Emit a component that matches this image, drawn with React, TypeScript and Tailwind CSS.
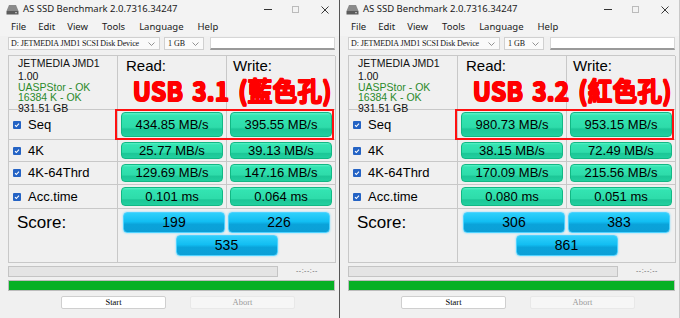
import React from "react";

type Win = {
  tag: string;
  rows: { label: string; read: string; write: string }[];
  scores: [string, string, string];
};

const windows: Win[] = [
  {
    tag: "USB 3.1 (藍色孔)",
    rows: [
      { label: "Seq", read: "434.85 MB/s", write: "395.55 MB/s" },
      { label: "4K", read: "25.77 MB/s", write: "39.13 MB/s" },
      { label: "4K-64Thrd", read: "129.69 MB/s", write: "147.16 MB/s" },
      { label: "Acc.time", read: "0.101 ms", write: "0.064 ms" },
    ],
    scores: ["199", "226", "535"],
  },
  {
    tag: "USB 3.2 (紅色孔)",
    rows: [
      { label: "Seq", read: "980.73 MB/s", write: "953.15 MB/s" },
      { label: "4K", read: "38.15 MB/s", write: "72.49 MB/s" },
      { label: "4K-64Thrd", read: "170.09 MB/s", write: "215.56 MB/s" },
      { label: "Acc.time", read: "0.080 ms", write: "0.051 ms" },
    ],
    scores: ["306", "383", "861"],
  },
];

const rowHeights = ["h-[30px]", "h-[22px]", "h-[23px]", "h-[24px]"];

function DriveIcon() {
  return (
    <svg width="13" height="11" viewBox="0 0 13 11">
      <path d="M3 1h7l2.5 6h-12z" fill="#8a8a8a" />
      <rect x="0.5" y="7" width="12" height="3.5" fill="#5c5c5c" />
      <rect x="9" y="8.2" width="2" height="1" fill="#c8c8c8" />
    </svg>
  );
}

function Check() {
  return (
    <div className="flex h-[8px] w-[8px] items-center justify-center rounded-[1px] bg-[#2463c4]">
      <svg width="6" height="6" viewBox="0 0 6 6">
        <path d="M1 3.2l1.3 1.3L5 1.6" stroke="white" strokeWidth="1.1" fill="none" />
      </svg>
    </div>
  );
}

function Chevron() {
  return (
    <svg width="7" height="4" viewBox="0 0 7 4" className="ml-auto shrink-0">
      <path d="M0.5 0.5l3 3 3-3" stroke="#777" strokeWidth="0.8" fill="none" />
    </svg>
  );
}

function ValueBox({ text }: { text: string }) {
  return (
    <div className="flex h-full items-center justify-center rounded-[4px] border border-[#12b884] bg-[linear-gradient(to_bottom,#5af2c8_0%,#33e4b2_12%,#2edcaa_62%,#1cc797_70%,#22cf9f_100%)] text-[13px] text-black">
      {text}
    </div>
  );
}

function ScoreBox({ text }: { text: string }) {
  return (
    <div className="flex h-[21px] w-[102px] items-center justify-center rounded-[4px] border border-[#4fd2ff] bg-[linear-gradient(to_bottom,#2fd0fb_0%,#12bef2_45%,#0aa3da_60%,#0c9fd6_100%)] text-[14px] text-black shadow-[0_0_2px_#6fd8ff]">
      {text}
    </div>
  );
}

function Window({ w, last }: { w: Win; last?: boolean }) {
  return (
    <div
      className={
        "relative h-[318px] w-[340px] shrink-0 bg-[#f0f0f0] " +
        (last ? "border-r border-[#c8c8c8]" : "border-r border-[#555]")
      }
    >
      {/* title bar */}
      <div className="flex h-[19px] items-center bg-[#f3f3f3] pl-[6px] pr-[10px] font-['Noto_Sans',sans-serif] text-[9.5px] text-[#1a1a1a]">
        <DriveIcon />
        <span className="ml-[4px]">AS SSD Benchmark 2.0.7316.34247</span>
        <span className="ml-auto mr-[20px] h-[1px] w-[8px] bg-[#333]" />
        <span className="mr-[22px] h-[7px] w-[7px] border border-[#bbb]" />
        <svg width="8" height="8" viewBox="0 0 8 8">
          <path d="M0.5 0.5l7 7M7.5 0.5l-7 7" stroke="#222" strokeWidth="0.9" />
        </svg>
      </div>

      {/* menu */}
      <div className="flex h-[17px] items-center gap-[12px] bg-[#f3f3f3] pl-[11px] font-['Noto_Sans',sans-serif] text-[9.5px] text-[#1a1a1a]">
        <span>File</span>
        <span>Edit</span>
        <span>View</span>
        <span className="ml-[2px]">Tools</span>
        <span className="ml-[2px]">Language</span>
        <span className="ml-[2px]">Help</span>
      </div>

      {/* selectors */}
      <div className="mt-[1px] flex h-[13px] items-stretch pl-[8px] font-['Liberation_Serif',serif] text-[8px] text-[#111]">
        <div className="flex w-[152px] items-center overflow-hidden whitespace-nowrap border border-[#d0d0d0] bg-[#fafafa] pl-[2px] pr-[4px] tracking-[-0.1px]">
          D: JETMEDIA JMD1 SCSI Disk Device
          <Chevron />
        </div>
        <div className="ml-[4px] flex w-[40px] items-center whitespace-nowrap border border-[#d0d0d0] bg-[#fafafa] pl-[3px] pr-[4px]">
          1 GB
          <Chevron />
        </div>
        <div className="ml-[6px] w-[125px] border border-b-2 border-[#d6d6d6] border-b-[#9a9a9a] bg-white" />
      </div>

      {/* results grid */}
      <div className="mx-[8px] mt-[5px] grid w-[327px] grid-cols-[109px_109px_109px] border-l border-t border-[#c8c8c8] font-['Liberation_Sans',Arial,sans-serif]">
        <div className="h-[54px] border-b border-r border-[#c8c8c8] pl-[9px] pt-[2px] text-[10.5px] leading-[10.5px] text-[#111]">
          <div className="mb-[2.5px]">JETMEDIA JMD1</div>
          <div>1.00</div>
          <div className="text-[#2b8a2b]">UASPStor - OK</div>
          <div className="text-[#2b8a2b]">16384 K - OK</div>
          <div>931.51 GB</div>
        </div>
        <div className="h-[54px] border-b border-r border-[#c8c8c8] pl-[8px] pt-[1px] text-[15px] leading-[18px] text-black">
          Read:
        </div>
        <div className="h-[54px] border-b border-r border-[#c8c8c8] pl-[6px] pt-[1px] text-[15px] leading-[18px] text-black">
          Write:
        </div>

        {w.rows.map((r, i) => (
          <React.Fragment key={r.label}>
            <div
              className={
                "flex items-center border-b border-r border-[#c8c8c8] pl-[4px] text-[13px] text-black " +
                rowHeights[i]
              }
            >
              <Check />
              <span className="ml-[7px]">{r.label}</span>
            </div>
            <div className={"border-b border-r border-[#c8c8c8] px-[3px] py-[2px] " + rowHeights[i]}>
              <ValueBox text={r.read} />
            </div>
            <div className={"border-b border-r border-[#c8c8c8] px-[3px] py-[2px] " + rowHeights[i]}>
              <ValueBox text={r.write} />
            </div>
          </React.Fragment>
        ))}

        <div className="h-[54px] border-b border-r border-[#c8c8c8] pl-[8px] pt-[1px] text-[17px] text-black">
          Score:
        </div>
        <div className="col-span-2 flex h-[54px] flex-col items-center gap-[2px] border-b border-r border-[#c8c8c8] pt-[3px]">
          <div className="flex gap-[3px]">
            <ScoreBox text={w.scores[0]} />
            <ScoreBox text={w.scores[1]} />
          </div>
          <ScoreBox text={w.scores[2]} />
        </div>
      </div>

      {/* progress */}
      <div className="mt-[3px] flex h-[11px] items-center pl-[8px]">
        <div className="h-full w-[270px] border border-[#c4c4c4] bg-[#e4e4e4]" />
        <span className="ml-[18px] font-['Liberation_Sans',sans-serif] text-[7px] tracking-[0.5px] text-[#666]">
          --:--:--
        </span>
      </div>
      <div className="mx-[8px] mt-[3px] h-[11px] w-[327px] border border-[#bcbcbc] bg-[#06b025]" />

      {/* buttons */}
      <div className="mt-[5px] flex h-[13px] pl-[61px] font-['Liberation_Serif',serif] text-[8.5px]">
        <div className="flex w-[105px] items-center justify-center rounded-[2px] border border-[#cfcfcf] bg-white text-black">
          Start
        </div>
        <div className="ml-[24px] flex w-[105px] items-center justify-center rounded-[2px] border border-[#e8e8e8] bg-[#f6f6f6] text-[#9a9a9a]">
          Abort
        </div>
      </div>

      {/* annotations */}
      <div className="pointer-events-none absolute left-[133px] top-[78px] origin-left scale-x-[0.93] whitespace-nowrap font-['Noto_Sans_CJK_TC',sans-serif] text-[26px] font-medium leading-[24px] tracking-[0.8px] text-[#ff0000] [word-spacing:3px] [-webkit-text-stroke:2px_white] [paint-order:stroke_fill] [text-shadow:1px_0_0_#ff0000,-1px_0_0_#ff0000,0_1px_0_#ff0000,0_-1px_0_#ff0000,1px_1px_0_#ff0000,-1px_-1px_0_#ff0000,1px_-1px_0_#ff0000,-1px_1px_0_#ff0000]">
        {w.tag}
      </div>
      <div className="pointer-events-none absolute left-[115px] top-[109px] h-[31px] w-[219px] border-2 border-[#ff1010]" />
    </div>
  );
}

export default function App() {
  return (
    <div className="flex h-[318px] w-[680px] overflow-hidden bg-white">
      <Window w={windows[0]} />
      <Window w={windows[1]} last />
    </div>
  );
}
